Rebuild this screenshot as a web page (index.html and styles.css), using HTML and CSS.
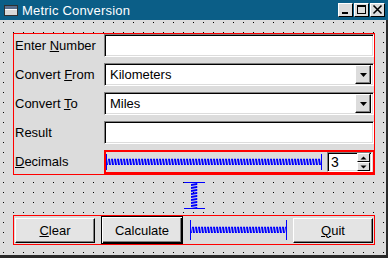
FILE: index.html
```html
<!DOCTYPE html>
<html lang="en">
<head>
    <meta charset="UTF-8">
    <title>Metric Conversion</title>
    <link rel="stylesheet" href="styles.css">
</head>
<body>
    <div class="window">
        <div class="titlebar">
            <svg class="app-icon" width="14" height="11" viewBox="0 0 14 11">
                <rect x="0.5" y="0.5" width="13" height="10" fill="#d8d8d8" stroke="#303030"/>
                <rect x="1" y="1" width="12" height="3" fill="#5a6e8c"/>
                <line x1="1" y1="4.5" x2="13" y2="4.5" stroke="#ffffff"/>
            </svg>
            <span class="title">Metric Conversion</span>
            <div class="title-buttons">
                <div class="tbtn">
                    <svg width="13" height="12" viewBox="0 0 13 12"><rect x="3" y="8" width="6" height="2" fill="#000"/></svg>
                </div>
                <div class="tbtn">
                    <svg width="13" height="12" viewBox="0 0 13 12"><rect x="2.5" y="1.5" width="8" height="8" fill="none" stroke="#000"/><rect x="2" y="1" width="9" height="2" fill="#000"/></svg>
                </div>
                <div class="tbtn">
                    <svg width="13" height="12" viewBox="0 0 13 12"><path d="M2.5 1.5 L10.5 9.5 M10.5 1.5 L2.5 9.5" stroke="#000" stroke-width="1.6"/></svg>
                </div>
            </div>
        </div>

        <div class="form">
            <div class="layout grid-box">
                <span class="label">Enter <u>N</u>umber</span>
                <div class="field"></div>

                <span class="label">Convert <u>F</u>rom</span>
                <div class="field combo">
                    <span class="value">Kilometers</span>
                    <div class="drop">
                        <svg width="9" height="6" viewBox="0 0 9 6"><path d="M1 1 H8 L4.5 5 Z" fill="#000"/></svg>
                    </div>
                </div>

                <span class="label">Convert <u>T</u>o</span>
                <div class="field combo">
                    <span class="value">Miles</span>
                    <div class="drop">
                        <svg width="9" height="6" viewBox="0 0 9 6"><path d="M1 1 H8 L4.5 5 Z" fill="#000"/></svg>
                    </div>
                </div>

                <span class="label">Result</span>
                <div class="field"></div>

                <span class="label"><u>D</u>ecimals</span>
                <div class="layout decimals">
                    <div class="hspacer">
                        <svg width="100%" height="100%">
                            <defs>
                                <pattern id="coil-a" width="3" height="16" patternUnits="userSpaceOnUse">
                                    <path d="M0.5 11 L1.5 5 L2.5 5 L2.5 11" fill="none" stroke="#0000ff"/>
                                </pattern>
                            </defs>
                            <rect x="0" y="0" width="100%" height="100%" fill="url(#coil-a)"/>
                        </svg>
                    </div>
                    <div class="field spin">
                        <span class="value">3</span>
                        <div class="spin-btns">
                            <div class="sbtn"><svg width="7" height="4" viewBox="0 0 7 4"><path d="M0.5 3.5 H6.5 L3.5 0.5 Z" fill="#000"/></svg></div>
                            <div class="sbtn"><svg width="7" height="4" viewBox="0 0 7 4"><path d="M0.5 0.5 H6.5 L3.5 3.5 Z" fill="#000"/></svg></div>
                        </div>
                    </div>
                </div>
            </div>

            <div class="vspacer-row">
                <div class="vspacer">
                    <svg width="21" height="27">
                        <defs>
                            <pattern id="coil-v" width="21" height="3" patternUnits="userSpaceOnUse">
                                <path d="M7 0.5 L13 1.5 L13 2.5 L7 2.5" fill="none" stroke="#0000ff"/>
                            </pattern>
                        </defs>
                        <line x1="0" y1="0.5" x2="21" y2="0.5" stroke="#0000ff"/>
                        <rect x="0" y="1" width="21" height="25" fill="url(#coil-v)"/>
                        <line x1="0" y1="26.5" x2="21" y2="26.5" stroke="#0000ff"/>
                    </svg>
                </div>
            </div>

            <div class="layout button-row">
                <div class="button"><span><u>C</u>lear</span></div>
                <div class="button default">Calculate</div>
                <div class="hspacer small">
                    <svg width="100%" height="100%">
                        <defs>
                            <pattern id="coil-b" width="3" height="20" patternUnits="userSpaceOnUse">
                                <path d="M0.5 13 L1.5 7 L2.5 7 L2.5 13" fill="none" stroke="#0000ff"/>
                            </pattern>
                        </defs>
                        <rect x="0" y="0" width="100%" height="100%" fill="url(#coil-b)"/>
                    </svg>
                </div>
                <div class="button quit"><span><u>Q</u>uit</span></div>
            </div>
        </div>
    </div>
</body>
</html>
```

FILE: styles.css
```css
html, body {
    margin: 0;
    padding: 0;
}
body {
    font-family: "Liberation Sans", Arial, sans-serif;
    font-size: 13px;
    color: #000;
    width: 388px;
    height: 258px;
    overflow: hidden;
    background: #dcdcdc;
}
.window {
    width: 388px;
    height: 258px;
}
.titlebar {
    height: 20px;
    background: #0b5e87;
    display: flex;
    align-items: center;
    color: #fff;
}
.app-icon {
    margin-left: 4px;
    margin-top: 1px;
}
.title {
    margin-left: 4px;
    font-size: 13px;
    letter-spacing: 0.2px;
}
.title-buttons {
    margin-left: auto;
    margin-right: 3px;
    display: flex;
    gap: 1px;
}
.tbtn {
    width: 13px;
    height: 12px;
    background: #dcdcdc;
    border: 1px solid;
    border-color: #fff #000 #000 #fff;
    display: flex;
}

/* dialog body with designer grid */
.form {
    width: 386px;
    height: 222px;
    border-right: 2px solid #2a2a2a;
    border-bottom: 3px solid #2a2a2a;
    background:
        linear-gradient(90deg, #dcdcdc 9px, transparent 9px) -6px 0 / 10px 10px,
        linear-gradient(#dcdcdc 9px, #000 9px) 0 -7px / 10px 10px;
    padding-top: 13px;
}
.layout {
    border: 1px solid #ff0000;
}
.grid-box {
    margin-left: 13px;
    width: 360px;
    display: grid;
    grid-template-columns: 90px 1fr;
    grid-template-rows: 23px 23px 23px 23px 24px;
    row-gap: 6px;
    background: #dcdcdc;
}
.label {
    line-height: 23px;
    padding-left: 1px;
    white-space: nowrap;
}
.field {
    background: #fff;
    border: 1px solid;
    border-color: #808080 #fff #fff #808080;
    box-shadow: inset 1px 1px 0 #000, inset -1px -1px 0 #dcdcdc;
    display: flex;
    align-items: center;
    box-sizing: border-box;
}
.combo .value {
    padding-left: 5px;
}
.drop {
    margin-left: auto;
    margin-right: 2px;
    width: 14px;
    height: 17px;
    background: #dcdcdc;
    border: 1px solid;
    border-color: #fff #000 #000 #fff;
    box-shadow: inset -1px -1px 0 #808080;
    display: flex;
    align-items: center;
    justify-content: center;
}
.decimals {
    border-width: 2px;
    margin-right: -1px;
    display: flex;
    align-items: center;
    box-sizing: border-box;
}
.hspacer {
    flex: 1;
    height: 16px;
    border-left: 1px solid #0000ff;
    border-right: 1px solid #0000ff;
}
.spin {
    width: 45px;
    height: 20px;
    margin-left: 5px;
    margin-right: 1px;
}
.spin .value {
    padding-left: 3px;
    font-size: 14px;
}
.spin-btns {
    margin-left: auto;
    margin-right: 1px;
    display: flex;
    flex-direction: column;
}
.sbtn {
    width: 11px;
    height: 7px;
    background: #dcdcdc;
    border: 1px solid;
    border-color: #fff #000 #000 #fff;
    display: flex;
    align-items: center;
    justify-content: center;
}
.vspacer-row {
    margin-left: 13px;
    width: 362px;
    height: 40px;
    display: flex;
    justify-content: center;
    align-items: flex-start;
}
.vspacer {
    margin-top: 7px;
    height: 27px;
}
.button-row {
    margin-left: 13px;
    width: 360px;
    height: 28px;
    display: flex;
    align-items: center;
    background: #dcdcdc;
}
.button {
    width: 80px;
    height: 25px;
    box-sizing: border-box;
    background: #e4e4e4;
    border: 1px solid;
    border-color: #fff #000 #000 #fff;
    box-shadow: inset -1px -1px 0 #808080;
    display: flex;
    align-items: center;
    justify-content: center;
    margin-left: 1px;
}
.button.default {
    width: 82px;
    height: 28px;
    margin-left: 6px;
    border-color: #000;
    box-shadow: inset 1px 1px 0 #fff, inset -1px -1px 0 #000, inset -2px -2px 0 #808080;
}
.hspacer.small {
    flex: none;
    width: 95px;
    height: 20px;
    margin-left: 7px;
}
.button.quit {
    margin-left: 6px;
}
```
